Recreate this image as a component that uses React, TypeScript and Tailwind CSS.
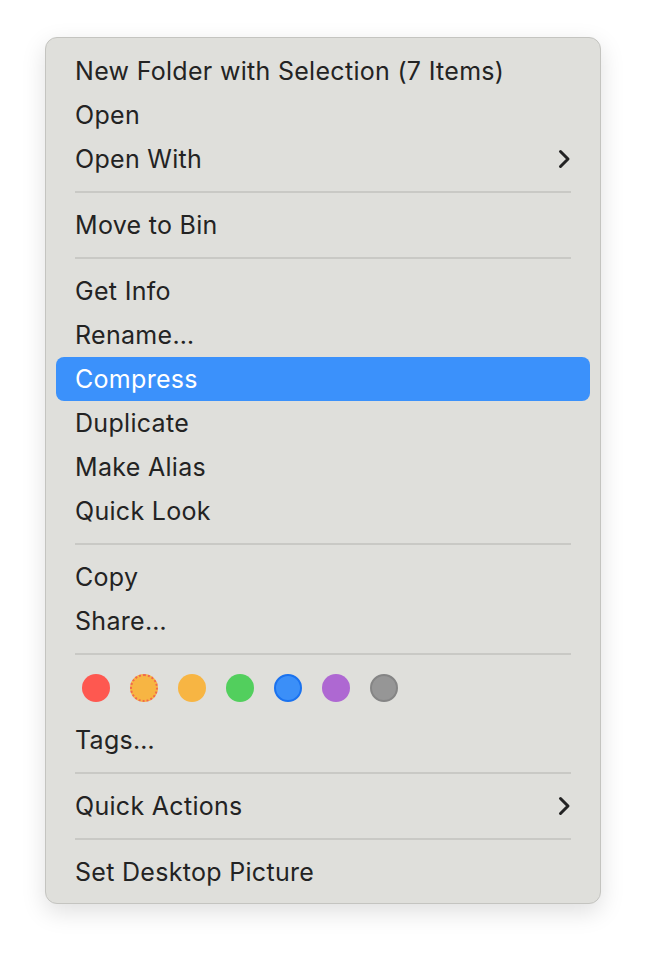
type Row =
  | { kind: "item"; label: string; sub?: boolean; active?: boolean }
  | { kind: "sep" }
  | { kind: "tags" };

const rows: Row[] = [
  { kind: "item", label: "New Folder with Selection (7 Items)" },
  { kind: "item", label: "Open" },
  { kind: "item", label: "Open With", sub: true },
  { kind: "sep" },
  { kind: "item", label: "Move to Bin" },
  { kind: "sep" },
  { kind: "item", label: "Get Info" },
  { kind: "item", label: "Rename…" },
  { kind: "item", label: "Compress", active: true },
  { kind: "item", label: "Duplicate" },
  { kind: "item", label: "Make Alias" },
  { kind: "item", label: "Quick Look" },
  { kind: "sep" },
  { kind: "item", label: "Copy" },
  { kind: "item", label: "Share…" },
  { kind: "sep" },
  { kind: "tags" },
  { kind: "item", label: "Tags…" },
  { kind: "sep" },
  { kind: "item", label: "Quick Actions", sub: true },
  { kind: "sep" },
  { kind: "item", label: "Set Desktop Picture" },
];

function Chevron() {
  return (
    <svg width="13" height="20" viewBox="0 0 13 20" fill="none" className="mr-[1px]">
      <path d="M2.5 2.5 L10 10 L2.5 17.5" stroke="currentColor" strokeWidth="3" strokeLinecap="round" strokeLinejoin="round" />
    </svg>
  );
}

function TagDots() {
  return (
    <div className="flex h-[53px] items-start gap-5 pl-[26px] pt-[9px]">
      <span className="h-7 w-7 rounded-full bg-[#fe5850]" />
      <span className="h-7 w-7 rounded-full border-2 border-dotted border-[#f2694a] bg-[#f7b543]" />
      <span className="h-7 w-7 rounded-full bg-[#f7b543]" />
      <span className="h-7 w-7 rounded-full bg-[#52cf5d]" />
      <span className="h-7 w-7 rounded-full border-2 border-[#1a72ef] bg-[#3b8ff8]" />
      <span className="h-7 w-7 rounded-full bg-[#ae68d2]" />
      <span className="h-7 w-7 rounded-full border-2 border-[#858585] bg-[#969696]" />
    </div>
  );
}

export default function App() {
  return (
    <div className="min-h-[958px] w-[646px] bg-white pt-[37px] pl-[45px]">
      <div
        className="w-[556px] rounded-[12px] border border-[#c4c4c0] bg-[#dfdfdb] px-[10px] pt-[11px] pb-[9px] text-[25px] text-[#232323] shadow-[0_8px_24px_rgba(0,0,0,0.13)]"
        style={{ fontFamily: "Inter, 'Liberation Sans', sans-serif" }}
      >
        {rows.map((r, i) => {
          if (r.kind === "sep")
            return (
              <div key={i} className="flex h-[22px] items-center px-[19px]">
                <div className="h-[2px] w-full bg-[#c9c9c5]" />
              </div>
            );
          if (r.kind === "tags") return <TagDots key={i} />;
          return (
            <div
              key={i}
              className={
                r.active
                  ? "flex h-[44px] items-center justify-between rounded-[8px] bg-[#3b91fb] pl-[19px] pr-[18px] text-white"
                  : "flex h-[44px] items-center justify-between pl-[19px] pr-[18px]"
              }
            >
              <span className="mt-[2px] tracking-[0.3px]">{r.label}</span>
              {r.sub && <Chevron />}
            </div>
          );
        })}
      </div>
    </div>
  );
}
